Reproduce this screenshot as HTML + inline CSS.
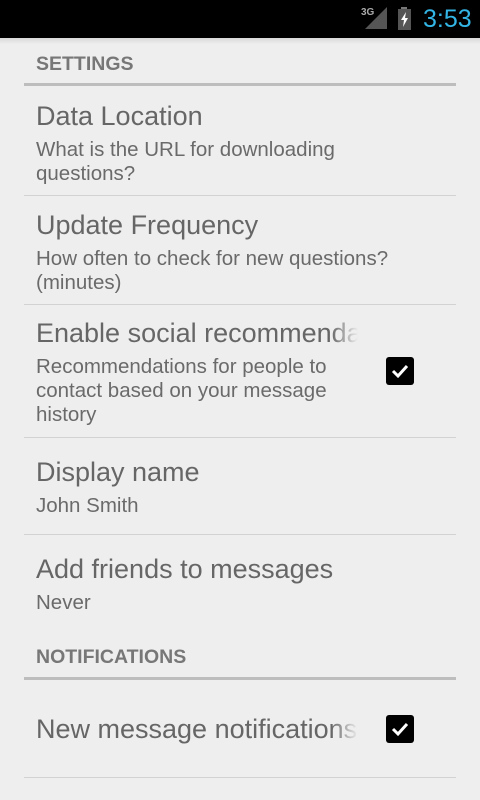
<!DOCTYPE html>
<html><head><meta charset="utf-8"><style>
*{margin:0;padding:0;box-sizing:border-box}
body{width:480px;height:800px;background:#eeeeee;font-family:"Liberation Sans",sans-serif;position:relative;overflow:hidden}
.sb{position:absolute;left:0;top:0;width:480px;height:38px;background:#000}
.sh{position:absolute;left:0;top:38px;width:480px;height:6px;background:linear-gradient(#d8d8d8,#eeeeee)}
.t{position:absolute;left:36px;color:#666;font-size:27px;white-space:nowrap;line-height:30px}
.s{position:absolute;left:36px;color:#6a6a6a;font-size:20.5px;line-height:24px;white-space:nowrap}
.h{position:absolute;left:36px;color:#777;font-size:19.5px;font-weight:bold;line-height:24px}
.hd{position:absolute;left:24px;width:432px;height:3px;background:#bdbdbd}
.d{position:absolute;left:24px;width:432px;height:1px;background:#d2d2d2}
.cb{position:absolute;left:386px;width:28px;height:28px;background:#000;border-radius:3px}
.clip{width:322px;overflow:hidden;-webkit-mask-image:linear-gradient(90deg,#000 295px,transparent 322px)}
</style></head><body>
<div class="sb">
<div style="position:absolute;left:361px;top:7px;color:#aaa;font-size:10px;font-weight:bold">3G</div>
<svg style="position:absolute;left:365px;top:7px" width="24" height="24"><polygon points="22,0 22,22 0,22" fill="#555"/></svg>
<svg style="position:absolute;left:397px;top:7px" width="16" height="24"><rect x="4" y="0" width="6" height="3" fill="#777"/><rect x="1" y="2" width="13" height="21" fill="#555"/><polygon points="9,5 4,13 7,13 6,20 11,11 8,11" fill="#fff"/></svg>
<div style="position:absolute;left:423px;top:5px;color:#33b5e5;font-size:25px">3:53</div>
</div>
<div class="sh"></div>

<div class="h" style="top:52px">SETTINGS</div>
<div class="hd" style="top:83px"></div>

<div class="t" style="top:101px">Data Location</div>
<div class="s" style="top:138px">What is the URL for downloading<br>questions?</div>
<div class="d" style="top:195px"></div>

<div class="t" style="top:210px">Update Frequency</div>
<div class="s" style="top:247px">How often to check for new questions?<br>(minutes)</div>
<div class="d" style="top:304px"></div>

<div class="t clip" style="top:318px">Enable social recommendations</div>
<div class="s" style="top:355px">Recommendations for people to<br>contact based on your message<br>history</div>
<div class="cb" style="top:357px"><svg width="28" height="28"><polyline points="7,14 12,19 21,9" fill="none" stroke="#fff" stroke-width="3"/></svg></div>
<div class="d" style="top:437px"></div>

<div class="t" style="top:457px">Display name</div>
<div class="s" style="top:494px">John Smith</div>
<div class="d" style="top:534px"></div>

<div class="t" style="top:554px">Add friends to messages</div>
<div class="s" style="top:591px">Never</div>

<div class="h" style="top:645px">NOTIFICATIONS</div>
<div class="hd" style="top:677px"></div>

<div class="t clip" style="top:714px">New message notifications</div>
<div class="cb" style="top:715px"><svg width="28" height="28"><polyline points="7,14 12,19 21,9" fill="none" stroke="#fff" stroke-width="3"/></svg></div>
<div class="d" style="top:777px"></div>
</body></html>
